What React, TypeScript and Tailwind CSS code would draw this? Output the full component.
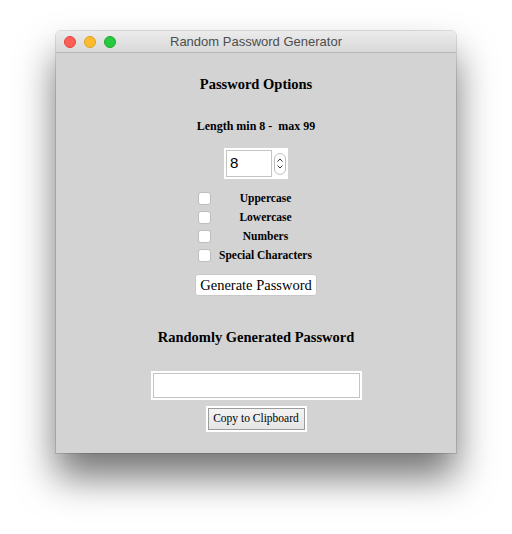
export default function App() {
  const options = ['Uppercase', 'Lowercase', 'Numbers', 'Special Characters'];

  return (
    <div className="h-[534px] w-[512px] bg-white pt-[31px] pl-[56px]">
      <div className="w-[400px] overflow-hidden rounded-t-[5px] shadow-[0_24px_38px_rgba(0,0,0,0.55),0_0_0_1px_rgba(0,0,0,0.12)]">
        {/* title bar */}
        <div className="relative flex h-[22px] items-center justify-center border-b border-[#b6b6b6] bg-gradient-to-b from-[#ececec] to-[#d8d8d8]">
          <div className="absolute left-[8px] top-[5px] flex gap-[8px]">
            <span className="h-[12px] w-[12px] rounded-full border border-[#e0443e] bg-[#fd5f57]" />
            <span className="h-[12px] w-[12px] rounded-full border border-[#dea123] bg-[#febb2e]" />
            <span className="h-[12px] w-[12px] rounded-full border border-[#1aab29] bg-[#28c840]" />
          </div>
          <span className="font-['Liberation_Sans',sans-serif] text-[13px] text-[#4d4d4d]">Random Password Generator</span>
        </div>

        {/* body */}
        <div className="flex h-[400px] flex-col items-center bg-[#d3d3d3] font-['Liberation_Serif',serif] text-black">
          <h2 className="mt-[23px] text-[14.5px] font-bold leading-[17px]">Password Options</h2>
          <p className="mt-[26px] text-[12px] font-bold leading-[15px]">Length min 8 -&nbsp; max 99</p>

          <div className="mt-[14px] flex h-[31px] w-[64px] items-center gap-[2px] bg-white px-[2px]">
            <div className="flex h-[27px] w-[46px] items-center border border-[#c4c4c4] pl-[3px] font-['Liberation_Sans',sans-serif] text-[15px]">8</div>
            <div className="flex h-[22px] w-[12px] flex-col items-center justify-center gap-[3px] rounded-[6px] border border-[#c0c0c0]">
              <svg width="6" height="4" viewBox="0 0 6 4" fill="none" stroke="#333" strokeWidth="1">
                <path d="M0.5 3.5 L3 1 L5.5 3.5" />
              </svg>
              <svg width="6" height="4" viewBox="0 0 6 4" fill="none" stroke="#333" strokeWidth="1">
                <path d="M0.5 0.5 L3 3 L5.5 0.5" />
              </svg>
            </div>
          </div>

          <div className="mt-[13px] flex flex-col gap-[6px] pl-[6px]">
            {options.map((o) => (
              <label key={o} className="flex h-[13px] items-center">
                <span className="h-[13px] w-[13px] rounded-[3px] border border-[#bdbdbd] bg-white" />
                <span className="w-[110px] text-center text-[11.5px] font-bold leading-[13px]">{o}</span>
              </label>
            ))}
          </div>

          <button className="mt-[12px] h-[22px] w-[122px] rounded-[3px] border border-[#c8c8c8] bg-white text-[14.5px] leading-[18px]">
            Generate Password
          </button>

          <h2 className="mt-[33px] text-[14.5px] font-bold leading-[17px]">Randomly Generated Password</h2>

          <div className="mt-[25px] h-[29px] w-[211px] bg-white p-[2px]">
            <div className="h-full w-full border border-[#c4c4c4]" />
          </div>

          <button className="mt-[6px] h-[26px] w-[101px] border-2 border-white bg-gradient-to-b from-[#f4f4f4] to-[#e4e4e4] text-[11.5px] outline outline-1 -outline-offset-3 outline-[#9c9c9c]">
            Copy to Clipboard
          </button>
        </div>
      </div>
    </div>
  );
}
